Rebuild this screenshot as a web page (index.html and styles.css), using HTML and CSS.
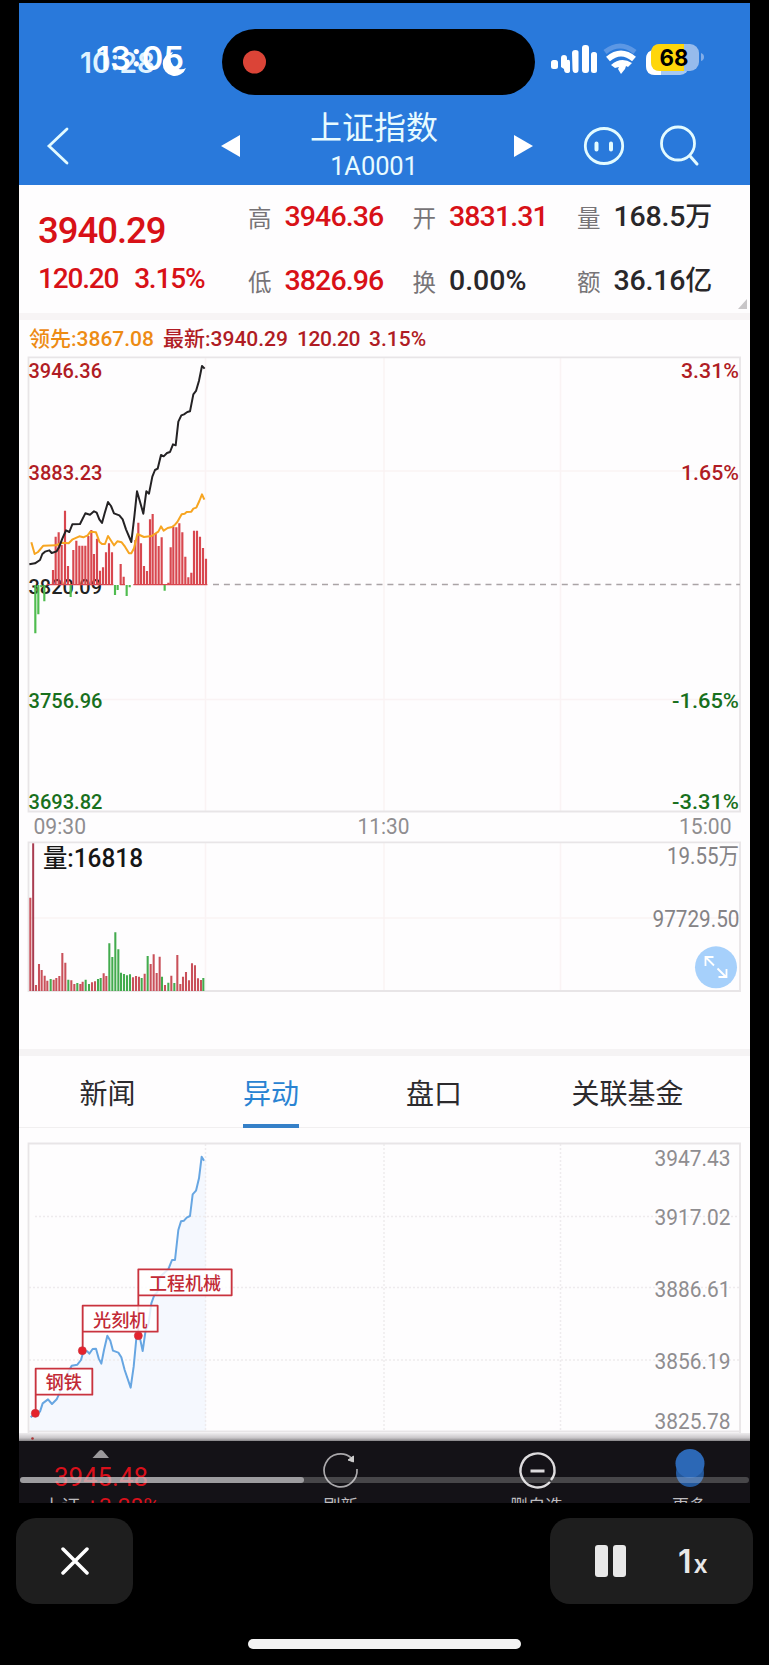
FILE: index.html
```html
<!DOCTYPE html>
<html lang="zh-CN">
<head>
<meta charset="utf-8">
<title>上证指数</title>
<link rel="stylesheet" href="styles.css">
</head>
<body>
<main class="screen">
  <header class="header">
    <svg class="status" viewBox="19 3 731 105" width="731" height="105">
      <text class="old-time" x="80" y="73" textLength="75" lengthAdjust="spacingAndGlyphs">10:28</text>
      <path class="white" d="M173 52a12 12 0 1 0 13 16a10.500 10.500 0 0 1-13-16z"/>
      <text class="time" x="96" y="70" textLength="88" lengthAdjust="spacingAndGlyphs">13:05</text>
      <rect x="222" y="29" width="313" height="66" rx="33" fill="#000"/>
      <circle cx="254.500" cy="62" r="11.500" fill="#db4437"/>
      <g class="white">
        <rect x="551" y="60" width="7" height="9" rx="2.500"/>
        <path d="M561 58q0-3 3-3t3 3v2q3-1 3 2v9q0 2-3 2t-3-4l-3-2z"/>
        <path d="M572 53q0-3 3.500-3t3 3v17q0 3-3 3t-3-4z"/>
        <rect x="582" y="45" width="7" height="28" rx="3"/>
        <rect x="591" y="52" width="6" height="21" rx="2.500"/>
      </g>
      <path d="M605 52Q620 40 635 52" fill="none" stroke="#5c97e4" stroke-width="5"/>
      <path d="M608 59Q621 48 634 59" fill="none" stroke="#fff" stroke-width="6"/>
      <path class="white" d="M611 65Q621 56 632 63L628 67L626 66L625 69L621 74L618 69L619 67L615 68z"/>
      <rect x="646" y="50" width="43" height="25" rx="9" fill="#a7c8f2"/>
      <path class="white" d="M657 50h-2q-9 0-9 9v7q0 9 9 9h6v-8h-5z"/>
      <rect x="651" y="44" width="48" height="27" rx="9" fill="#96bbec"/>
      <path d="M660 44h24v27h-24q-9 0-9-9v-9q0-9 9-9z" fill="#ffd60a"/>
      <path d="M701 53q3 1 3 4t-3 4z" fill="#82aee9"/>
      <text class="battery" x="659.500" y="65.500" textLength="29" lengthAdjust="spacingAndGlyphs">68</text>
    </svg>
    <nav class="nav">
      <svg class="back" width="24" height="38" viewBox="0 0 24 38"><path d="M21 2 3 19 21 36"/></svg>
      <svg class="prev" width="20" height="24" viewBox="0 0 20 24"><path d="M0 12 19 1V23z"/></svg>
      <div class="title"><h1>上证指数</h1><span>1A0001</span></div>
      <svg class="next" width="20" height="24" viewBox="0 0 20 24"><path d="M0 1 19 12 0 23z"/></svg>
      <svg class="face" width="42" height="42" viewBox="0 0 42 42"><ellipse cx="21" cy="21" rx="18.700" ry="17.500"/><path d="M13.500 18.500v6M28 18.500v6" stroke-width="4"/></svg>
      <svg class="search" width="42" height="42" viewBox="0 0 42 42"><circle cx="20" cy="18.500" r="16.500"/><path d="m32 31 7 8" stroke-width="3"/></svg>
    </nav>
  </header>

  <section class="quote">
    <div class="last"><strong>3940.29</strong><div class="change"><span>120.20</span><span>3.15%</span></div></div>
    <dl class="stats">
      <div><dt>高</dt><dd class="up">3946.36</dd></div>
      <div><dt>开</dt><dd class="up">3831.31</dd></div>
      <div><dt>量</dt><dd>168.5<b>万</b></dd></div>
      <div><dt>低</dt><dd class="up">3826.96</dd></div>
      <div><dt>换</dt><dd class="turnover">0.00%</dd></div>
      <div><dt>额</dt><dd>36.16<b>亿</b></dd></div>
    </dl>
    <i class="corner"></i>
  </section>

  <div class="legend"><span class="lead">领先:<b>3867.08</b></span><span>最新:<b>3940.29</b></span><b class="chg">120.20</b><b class="pct">3.15%</b></div>

  <svg class="chart" viewBox="19 354 731 486" width="731" height="486">
    <path class="grid" d="M205.500 358V811M384 358V811M560.500 358V811M29 471H740M29 699.500H740"/>
    <path class="frame" d="M28.500 357.300H740V811.500H28.500z"/>
    <path d="M213 584.500H740" stroke="#aaa4a6" stroke-width="1.700" stroke-dasharray="6 4.900"/>
    <text class="mid" x="28.500" y="593.500" textLength="73.500" lengthAdjust="spacingAndGlyphs">3820.09</text>
    <g transform="translate(20 350) scale(.33333)" fill="none">
      <path class="bar-up" d="M99 705V660M107 705V560M116 705V547M125 705V585M135 705V482M144 705V648M160 705V600M169 705V572M178 705V587M187 705V587M196 705V587M205 705V558M214 705V540M222 705V612M231 705V566M240 705V662M249 705V652M258 705V607M267 705V580M276 705V607M302 705V642M311 705V680M346 705V570M355 705V518M363 705V580M372 705V648M381 705V663M390 705V508M398 705V492M407 705V550M416 705V588M425 705V562M445 705V698M452 705V592M460 705V530M469 705V532M478 705V520M487 705V547M496 705V620M505 705V682M514 705V668M522 705V542M531 705V542M540 705V560M549 705V594M558 705V626"/>
      <path d="M80 704H280M300 704H315M340 704H562" stroke="#d8474f" stroke-width="4"/>
      <path class="bar-down" d="M46 705V850M55 705V793M64 705V712M73 705V754M152 705V741M285 705V735M293 705V720M320 705V738M329 705V712M434 705V722"/>
      <polyline class="avg" points="34,577 44,612 54,606 70,587 108,586 125,578 146,580 158,568 178,559 190,562 203,556 211,545 228,547 238,575 246,582 255,582 264,558 282,586 292,574 305,577 315,590 327,610 334,610 342,595 352,552 372,561 395,558 415,545 423,529 431,542 443,534 456,531 465,524 472,516 485,493 494,491 500,486 514,485 520,476 529,473 538,453 546,433 553,449"/>
      <polyline class="price" points="28,643 45,640 60,630 67,612 75,605 88,601 95,609 110,604 118,590 126,568 138,541 148,546 157,523 180,522 196,490 210,494 222,484 230,488 238,508 246,519 254,490 264,456 273,468 282,490 298,496 308,508 318,538 334,576 343,500 351,424 360,455 370,491 379,424 387,431 397,380 405,360 413,356 423,315 431,319 441,309 450,306 459,283 467,286 475,215 484,196 492,193 502,186 510,184 520,133 528,123 537,92 546,48 554,56"/>
    </g>
    <g class="up-text">
      <text x="28.500" y="378.300" textLength="73.500" lengthAdjust="spacingAndGlyphs">3946.36</text>
      <text x="28.500" y="479.700" textLength="74" lengthAdjust="spacingAndGlyphs">3883.23</text>
      <text x="681" y="378.300" textLength="58" lengthAdjust="spacingAndGlyphs">3.31%</text>
      <text x="681" y="480" textLength="58" lengthAdjust="spacingAndGlyphs">1.65%</text>
    </g>
    <g class="down-text">
      <text x="28.500" y="708.300" textLength="74" lengthAdjust="spacingAndGlyphs">3756.96</text>
      <text x="28.500" y="809.300" textLength="74" lengthAdjust="spacingAndGlyphs">3693.82</text>
      <text x="672" y="708.300" textLength="67" lengthAdjust="spacingAndGlyphs">-1.65%</text>
      <text x="672" y="809.300" textLength="67" lengthAdjust="spacingAndGlyphs">-3.31%</text>
    </g>
    <g class="axis">
      <text x="33.500" y="834" textLength="52.500" lengthAdjust="spacingAndGlyphs">09:30</text>
      <text x="357.500" y="834" textLength="52" lengthAdjust="spacingAndGlyphs">11:30</text>
      <text x="679" y="834" textLength="52.500" lengthAdjust="spacingAndGlyphs">15:00</text>
    </g>
  </svg>

  <svg class="chart volume" viewBox="19 840 731 209" width="731" height="209">
    <path class="grid" d="M205.500 843V990M384 843V990M560.500 843V990M29 918H740"/>
    <path class="frame" d="M28.500 842.300H740V991H28.500z"/>
    <g transform="translate(20 830) scale(.33333)" fill="none">
      <path class="vol-up" d="M31 483V203M48 483V465M57 483V402M65 483V420M74 483V437M82 483V452M101 483V449M109 483V444M118 483V438M127 483V369M136 483V398M154 483V451M163 483V462M181 483V462M188 483V455M216 483V457M225 483V454M251 483V430M259 483V438M339 483V442M348 483V438M357 483V440M374 483V431M392 483V402M401 483V373M410 483V429M419 483V380M435 483V465M454 483V437M472 483V375M481 483V462M489 483V440M498 483V426M507 483V451M516 483V400M525 483V406M534 483V445M543 483V450"/>
      <path class="vol-first" d="M39.500 483V40"/>
      <path class="vol-down" d="M92 483V447M145 483V449M172 483V459M197 483V449M207 483V462M234 483V447M242 483V444M268 483V340M277 483V381M286 483V307M295 483V358M303 483V428M312 483V432M321 483V436M330 483V433M365 483V444M383 483V378M426 483V440M445 483V458M463 483V459M550 483V444"/>
    </g>
    <text class="vol-label" x="43" y="867" textLength="100" lengthAdjust="spacingAndGlyphs">量:16818</text>
    <g class="vol-axis">
      <text x="667" y="863.500" textLength="72" lengthAdjust="spacingAndGlyphs">19.55万</text>
      <text x="652.500" y="926.500" textLength="87" lengthAdjust="spacingAndGlyphs">97729.50</text>
    </g>
    <circle cx="716" cy="967.300" r="21" fill="#a6d0fb"/>
    <path d="M705.500 966v-9h8M706 957.500l8 8M726.500 969v8h-8M725.500 976.500l-8-8" fill="none" stroke="#fff" stroke-width="1.800"/>
  </svg>

  <nav class="tabs"><a>新闻</a><a class="active">异动</a><a>盘口</a><a>关联基金</a></nav>

  <svg class="chart moves" viewBox="19 1128 731 313" width="731" height="313">
    <defs><linearGradient id="fade" x1="0" y1="0" x2="0" y2="1"><stop offset="0" stop-color="#eeecee"/><stop offset=".6" stop-color="#c9c6c9"/><stop offset="1" stop-color="#858386"/></linearGradient></defs>
    <path transform="translate(20 1130) scale(.33333)" fill="#f5f8fe" d="M32 862 46 850 60 845 68 820 84 808 96 822 110 808 118 790 130 755 155 707 172 704 190 665 208 671 228 656 244 701 262 617 279 662 304 682 332 773 350 615 368 663 386 580 394 520 403 495 420 440 456 390 465 390 475 300 483 274 510 258 518 193 528 182 545 80 558 90V904H28z"/>
    <path class="dots" d="M205.500 1144V1431M384 1144V1431M560.500 1144V1431M35 1216.500H740M29 1287.500H740M29 1360H740"/>
    <path class="frame" d="M28.500 1440V1143.500H740V1440M28.500 1431.500H740"/>
    <rect x="19" y="1433" width="731" height="8" fill="url(#fade)"/>
    <circle cx="32.500" cy="1438.500" r="1.300" fill="#a33"/>
    <g transform="translate(20 1130) scale(.33333)">
      <polyline class="trend" points="32,862 46,850 60,845 68,820 84,808 96,822 110,808 118,790 130,755 140,735 155,707 172,704 183,690 190,665 202,664 208,671 218,657 228,656 236,685 244,701 252,660 262,617 271,632 279,662 295,668 304,682 314,720 332,773 341,710 350,615 360,625 368,663 377,600 386,580 394,520 403,495 412,487 420,440 445,418 456,390 465,390 475,300 483,274 492,272 500,263 510,258 518,193 528,182 537,145 545,80 552,92"/>
      <g class="tag">
        <path d="M355 617V418H635V496H355"/><circle cx="355" cy="617" r="12"/>
        <path d="M188 662V527H413V605H188"/><circle cx="187" cy="662" r="12"/>
        <path d="M47 850V716H217V794H47"/><circle cx="46" cy="850" r="12"/>
      </g>
    </g>
    <g class="tag-text">
      <text x="149" y="1290" textLength="72" lengthAdjust="spacingAndGlyphs">工程机械</text>
      <text x="93" y="1326.500" textLength="54.500" lengthAdjust="spacingAndGlyphs">光刻机</text>
      <text x="45.500" y="1389" textLength="36.500" lengthAdjust="spacingAndGlyphs">钢铁</text>
    </g>
    <g class="axis">
      <text x="654.500" y="1166" textLength="76" lengthAdjust="spacingAndGlyphs">3947.43</text>
      <text x="654.500" y="1225" textLength="76" lengthAdjust="spacingAndGlyphs">3917.02</text>
      <text x="654.500" y="1296.500" textLength="76" lengthAdjust="spacingAndGlyphs">3886.61</text>
      <text x="654.500" y="1368.500" textLength="76" lengthAdjust="spacingAndGlyphs">3856.19</text>
      <text x="654.500" y="1429" textLength="76" lengthAdjust="spacingAndGlyphs">3825.78</text>
    </g>
  </svg>

  <footer class="toolbar">
    <svg viewBox="19 1441 731 62" width="731" height="62">
      <path d="M92.500 1458 99 1451Q101 1449 103 1451L109 1458z" fill="#9b999c"/>
      <g class="red">
        <text x="54" y="1485.500" font-size="25" textLength="94" lengthAdjust="spacingAndGlyphs">3945.48</text>
        <text x="86" y="1513.500" font-size="22" textLength="74" lengthAdjust="spacingAndGlyphs">+3.28%</text>
      </g>
      <g class="tool-label">
        <text x="43" y="1512" textLength="37" lengthAdjust="spacingAndGlyphs">上证</text>
        <text x="323" y="1512" textLength="35" lengthAdjust="spacingAndGlyphs">刷新</text>
        <text x="510" y="1512" textLength="53" lengthAdjust="spacingAndGlyphs">删自选</text>
        <text x="672" y="1512" textLength="34" lengthAdjust="spacingAndGlyphs">更多</text>
      </g>
      <path d="M351.500 1458A16.500 16.500 0 1 0 357 1469" fill="none" stroke="#aaa8ab" stroke-width="1.700"/>
      <path d="M353.500 1456V1462L348 1460z" fill="#ccc" stroke="#ccc"/>
      <path d="M554.500 1471A17 17 0 1 0 550 1482M551 1480Q555 1475 554.500 1470" fill="none" stroke="#dddbdd" stroke-width="2.400"/>
      <path d="M530.500 1471H544.500" stroke="#dddbdd" stroke-width="3"/>
      <circle cx="690" cy="1473" r="14" fill="#24589b"/>
      <circle cx="690" cy="1463.500" r="14.500" fill="#2c68b6"/>
      <rect x="20" y="1477" width="729" height="6" rx="3" fill="#fff" fill-opacity=".22"/>
      <rect x="20" y="1477" width="284" height="6" rx="3" fill="#c6c6c8" fill-opacity=".68"/>
    </svg>
  </footer>
</main>

<div class="controls">
  <button class="control close"><svg width="28" height="28" viewBox="0 0 28 28"><path d="M2 2 26 26M26 2 2 26"/></svg></button>
  <div class="control playback"><i class="pause"></i><span class="speed">1<small>x</small></span></div>
</div>
<div class="home"></div>
</body>
</html>
```
FILE: styles.css
```css
* { box-sizing: border-box; }
body {
  margin: 0;
  width: 769px;
  height: 1665px;
  overflow: hidden;
  background: #000;
  font-family: Roboto, "Noto Sans CJK SC", sans-serif;
}
svg { display: block; flex: none; }
svg text { white-space: pre; }
.screen { width: 731px; margin: 3px auto 0; height: 1500px; overflow: hidden; background: #fefdfe; }

.header { height: 182px; background: #2979db; }
.white { fill: #fff; }
.time { font: 600 33px Inter, sans-serif; fill: #fff; }
.old-time { font: 600 29px Inter, sans-serif; fill: #dff2ff; }
.battery { font: 700 23px Inter, sans-serif; fill: #000; }
.nav { display: flex; align-items: center; height: 75px; padding-left: 27px; }
.nav svg { fill: none; stroke: #e3fbff; stroke-width: 2.800; stroke-linecap: round; }
.nav .prev, .nav .next { fill: #fff; stroke: none; }
.nav .prev { margin-left: 151px; }
.title { width: 273px; padding-right: 7px; text-align: center; color: #e8fbff; margin-top: -1px; }
.title h1 { margin: 0; font-size: 32px; line-height: 42px; font-weight: 400; }
.title span { display: block; font-size: 25.500px; line-height: 34px; letter-spacing: -.1px; }
.face { margin-left: 49px; }
.search { margin-left: 33px; }

.quote { position: relative; display: flex; height: 135px; padding-left: 19px; border-bottom: 7px solid #f7f4f5; color: #d81117; }
.last { width: 210px; padding-top: 25px; }
.last strong { display: block; font-size: 36.500px; line-height: 42px; font-weight: 500; letter-spacing: -1px; }
.change { display: flex; gap: 16px; margin-top: 10px; font-size: 28px; line-height: 34px; font-weight: 500; letter-spacing: -1.200px; }
.stats { display: grid; grid-template-columns: 164.500px 164.500px 155px; grid-template-rows: 64px 64px; margin: 0; }
.stats div { display: flex; align-items: center; gap: 13px; }
.stats dt { font-size: 23.500px; color: #777477; }
.stats dd { margin: 0; font-size: 28.500px; line-height: 34px; font-weight: 500; letter-spacing: -.2px; color: #29272a; white-space: nowrap; }
.stats dd.up { color: #d81117; letter-spacing: -.9px; }
.stats .turnover { letter-spacing: 0; }
.stats b { font-size: 27px; line-height: 30px; font-weight: 500; }
.corner { position: absolute; right: 3px; bottom: 4px; border-left: 9px solid transparent; border-bottom: 10px solid #c8c6c8; }

.legend { display: flex; align-items: baseline; height: 34px; padding: 4px 0 0 10px; font-size: 21px; line-height: 31px; font-weight: 500; color: #b01c24; white-space: nowrap; }
.legend span { width: 134px; }
.legend .lead { color: #ed8b14; }
.legend b { font-size: 21px; font-weight: 500; }
.legend .chg { width: 72px; letter-spacing: -.4px; }
.legend .pct { letter-spacing: 0; }

.grid { fill: none; stroke: #faf3f4; stroke-width: 1.500; }
.frame { fill: none; stroke: #e8e5e7; stroke-width: 1.800; }
.dots { fill: none; stroke: #eeebed; stroke-width: 1.500; stroke-dasharray: 2 2; }
.chart text { font-size: 21px; font-weight: 500; }
.up-text { fill: #b01c24; }
.down-text { fill: #18701d; }
.mid { fill: #222; }
.chart .axis text { font-weight: 400; font-size: 22px; fill: #8f8d90; }
.chart .vol-axis text { font-weight: 400; font-size: 23px; fill: #858386; }
.chart .vol-label { font-size: 25px; fill: #161616; }
.bar-up { stroke: #d8474f; stroke-width: 6.500; }
.bar-down { stroke: #4fbc4f; stroke-width: 6.500; }
.avg { stroke: #f7a521; stroke-width: 6; stroke-linejoin: round; }
.price { stroke: #242224; stroke-width: 6; stroke-linejoin: round; }
.vol-up { stroke: #c9505a; stroke-width: 6.200; }
.vol-first { stroke: #a93c50; stroke-width: 6; }
.vol-down { stroke: #43ab4e; stroke-width: 6.200; }

.tabs { display: grid; grid-template-columns: 161px 166px 160px 227px; justify-items: center; height: 79px; padding: 0 8px; border-top: 7px solid #f5f3f4; border-bottom: 1px solid #f1eff0; }
.tabs a { font-size: 28px; line-height: 78px; height: 72px; color: #2c2a2d; }
.tabs .active { color: #2a83d2; border-bottom: 4px solid #3580c8; }

.trend { fill: none; stroke: #67a6e2; stroke-width: 6; stroke-linejoin: round; }
.tag path { fill: #fff; fill-opacity: .82; stroke: #c9333e; stroke-width: 5.500; stroke-linejoin: round; }
.tag circle { fill: #e5222c; stroke: #c9333e; stroke-width: 2; }
.chart .tag-text text { font-size: 18px; fill: #c22a36; }

.toolbar { height: 62px; background: #141217; overflow: hidden; }
.toolbar svg { overflow: hidden; }
.red { fill: #d9101b; }
.tool-label { font-size: 17.500px; fill: #bdbbbe; }

.controls { display: flex; justify-content: space-between; padding: 15px 16px 0; }
.control { display: flex; align-items: center; height: 86px; border: 0; border-radius: 20px; background: #1e1e1e; }
.close { width: 117px; justify-content: center; padding: 0; }
.close path { stroke: #fff; stroke-width: 3.500; stroke-linecap: round; }
.playback { width: 203px; padding-left: 45px; gap: 52px; }
.pause { display: flex; justify-content: space-between; width: 31px; height: 32px; }
.pause::before, .pause::after { content: ""; width: 13px; border-radius: 3px; background: #e8e8e8; }
.speed { font: 600 32px/1 Inter, sans-serif; color: #e8e8e8; display: flex; align-items: baseline; gap: 2px; padding-top: 2px; }
.speed small { font-size: 25px; }
.home { width: 273px; height: 10px; margin: 35px auto 0; border-radius: 5px; background: #f3f3f3; }
```
